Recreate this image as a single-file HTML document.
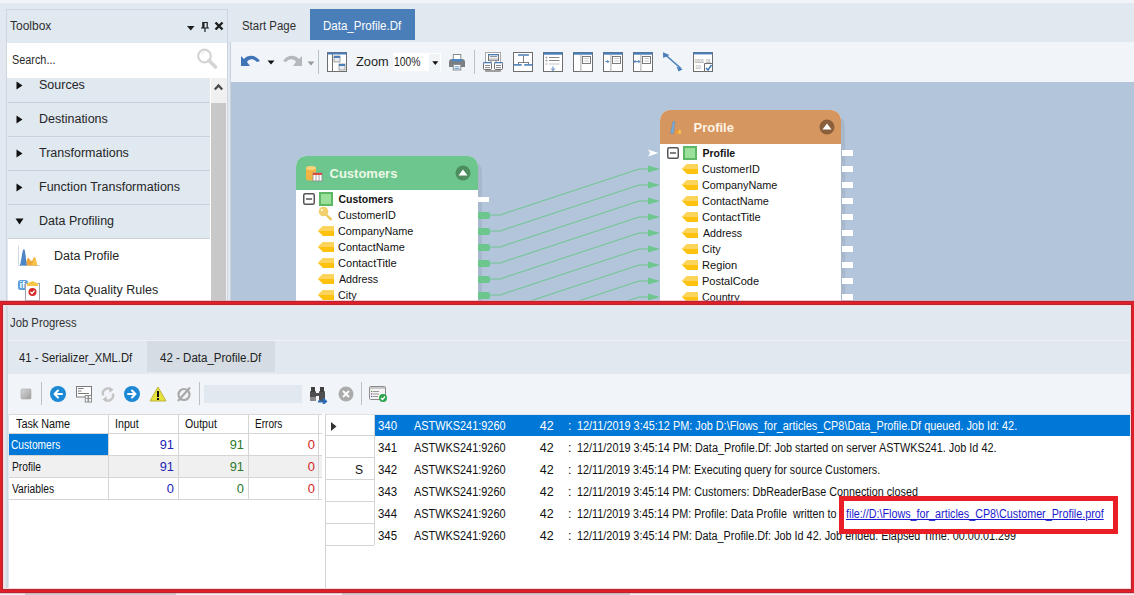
<!DOCTYPE html>
<html><head><meta charset="utf-8">
<style>
*{margin:0;padding:0;box-sizing:border-box}
html,body{width:1134px;height:595px;overflow:hidden;background:#E1E8EF;font-family:"Liberation Sans",sans-serif;color:#1E1E1E}
.a{position:absolute;display:block}
.t{position:absolute;white-space:pre;line-height:1}
</style></head><body>
<div class="a" style="left:0px;top:0px;width:1134px;height:3px;background:#F1F4F8"></div>
<div class="a" style="left:6px;top:9px;width:222px;height:292px;background:#E0E8F0;border:1px solid #CDD6E0;border-bottom:none"></div>
<div class="t" style="left:10.06px;top:19.72px;font-size:12.5px;color:#2E2E2E;font-weight:normal;transform:scaleX(0.9598);transform-origin:0 50%;">Toolbox</div>
<svg class="a" style="left:187px;top:26px" width="8" height="5" viewBox="0 0 8 5"><path d="M0 0H7.5L3.75 4.5Z" fill="#1E1E1E"/></svg>
<svg class="a" style="left:200px;top:21px" width="10" height="11" viewBox="0 0 10 11"><path d="M2.5 1.5H7.5M3 1V7M7.2 1V7M1 7H9M5 7V11" stroke="#1E1E1E" stroke-width="1.2" fill="none"/><rect x="2.5" y="1" width="2" height="6" fill="#1E1E1E"/></svg>
<svg class="a" style="left:214px;top:21px" width="10" height="10" viewBox="0 0 10 10"><path d="M1.5 1.5L8.5 8.5M8.5 1.5L1.5 8.5" stroke="#1E1E1E" stroke-width="2.4"/></svg>
<div class="a" style="left:7px;top:43px;width:220px;height:35px;background:#fff"></div>
<div class="t" style="left:11.51px;top:53.72px;font-size:12.5px;color:#2A2A2A;font-weight:normal;transform:scaleX(0.8688);transform-origin:0 50%;">Search...</div>
<svg class="a" style="left:196px;top:47px" width="24" height="24" viewBox="0 0 24 24"><circle cx="8.5" cy="9" r="6.3" stroke="#D4D4D4" stroke-width="2.2" fill="none"/><path d="M13 13.5L19.5 20" stroke="#D4D4D4" stroke-width="3.6" stroke-linecap="round"/><path d="M5.5 7.5A3.5 3.5 0 0 1 8.5 5" stroke="#E4E4E4" stroke-width="1" fill="none"/></svg>
<div class="a" style="left:8px;top:78px;width:202px;height:223px;overflow:hidden;background:#E0E8F0">
</div>
<div class="a" style="left:8px;top:102px;width:202px;height:1px;background:#C9D2DC"></div>
<div class="a" style="left:8px;top:136px;width:202px;height:1px;background:#C9D2DC"></div>
<div class="a" style="left:8px;top:170px;width:202px;height:1px;background:#C9D2DC"></div>
<div class="a" style="left:8px;top:204px;width:202px;height:1px;background:#C9D2DC"></div>
<div class="a" style="left:8px;top:238px;width:202px;height:1px;background:#C9D2DC"></div>
<div class="a" style="left:8px;top:239px;width:202px;height:62px;background:#FFFFFF"></div>
<div class="t" style="left:39px;top:78.92px;font-size:12.5px;color:#262626;font-weight:normal;">Sources</div>
<svg class="a" style="left:16px;top:81px" width="7" height="9" viewBox="0 0 7 9"><path d="M0.5 0.5L6.5 4.5L0.5 8.5Z" fill="#111"/></svg>
<div class="t" style="left:39px;top:112.92px;font-size:12.5px;color:#262626;font-weight:normal;">Destinations</div>
<svg class="a" style="left:16px;top:115px" width="7" height="9" viewBox="0 0 7 9"><path d="M0.5 0.5L6.5 4.5L0.5 8.5Z" fill="#111"/></svg>
<div class="t" style="left:39px;top:146.92px;font-size:12.5px;color:#262626;font-weight:normal;">Transformations</div>
<svg class="a" style="left:16px;top:149px" width="7" height="9" viewBox="0 0 7 9"><path d="M0.5 0.5L6.5 4.5L0.5 8.5Z" fill="#111"/></svg>
<div class="t" style="left:39px;top:180.92px;font-size:12.5px;color:#262626;font-weight:normal;">Function Transformations</div>
<svg class="a" style="left:16px;top:183px" width="7" height="9" viewBox="0 0 7 9"><path d="M0.5 0.5L6.5 4.5L0.5 8.5Z" fill="#111"/></svg>
<div class="t" style="left:39px;top:214.92px;font-size:12.5px;color:#262626;font-weight:normal;">Data Profiling</div>
<svg class="a" style="left:15px;top:218px" width="9" height="7" viewBox="0 0 9 7"><path d="M0.5 0.5H8.5L4.5 6.5Z" fill="#111"/></svg>
<div class="t" style="left:54px;top:250.42px;font-size:12.5px;color:#262626;font-weight:normal;">Data Profile</div>
<div class="t" style="left:54px;top:284.42px;font-size:12.5px;color:#262626;font-weight:normal;">Data Quality Rules</div>
<svg class="a" style="left:17px;top:245px" width="24" height="22" viewBox="0 0 24 22"><path d="M1.5 1V20.5H23" stroke="#D0D8E0" stroke-width="1" fill="none"/><path d="M9 20.5C9.5 14 10.5 13 11.5 13C12.5 13 13 16 14.5 16C16 16 16 12 17.5 12C19 12 19.5 20.5 21 20.5Z" fill="#F2A63A"/><path d="M15 20.5C16 16 16.5 12.5 17.5 12.5C19 12.5 19.5 20.5 21 20.5Z" fill="#F6C24A"/><path d="M2.5 20.5C4 20.5 5 4 7 4C8.5 4 9 17 10 20.5Z" fill="#4D86C6"/></svg>
<svg class="a" style="left:17px;top:279px" width="26" height="24" viewBox="0 0 26 24"><rect x="1" y="1" width="10" height="10" rx="2.5" fill="#5F9FDC"/><text x="2.6" y="9.3" font-size="9" fill="#fff" font-weight="bold" font-family="Liberation Sans">if</text><rect x="8.5" y="4.5" width="14" height="17" fill="#fff" stroke="#9AA4AE" stroke-width="1"/><path d="M10 7V4.5L15.5 2L21 4.5V7Z" fill="#F6C64A"/><circle cx="15.5" cy="13" r="4" fill="#D42B2B"/><path d="M13.5 13L15 14.5L17.6 11.6" stroke="#fff" stroke-width="1.3" fill="none"/></svg>
<div class="a" style="left:210px;top:78px;width:17px;height:223px;background:#F0F0F0"></div>
<div class="a" style="left:211px;top:103px;width:15px;height:198px;background:#C8C8C8"></div>
<div class="a" style="left:210px;top:78px;width:1px;height:223px;background:#FFFFFF"></div>
<svg class="a" style="left:213px;top:83px" width="11" height="8" viewBox="0 0 11 8"><path d="M1.8 6.5L5.5 2.5L9.2 6.5" stroke="#4A4A4A" stroke-width="2.3" fill="none"/></svg>
<div class="t" style="left:242.49px;top:19.72px;font-size:12.5px;color:#2E2E2E;font-weight:normal;transform:scaleX(0.9143);transform-origin:0 50%;">Start Page</div>
<div class="a" style="left:310px;top:9px;width:105px;height:31px;background:#4A7EB8"></div>
<div class="t" style="left:322.78px;top:19.72px;font-size:12.5px;color:#FFFFFF;font-weight:normal;transform:scaleX(0.9226);transform-origin:0 50%;">Data_Profile.Df</div>
<div class="a" style="left:230px;top:42px;width:904px;height:40px;background:#F1F5F9;border-left:1px solid #C9D2DC"></div>
<div class="a" style="left:230px;top:82px;width:904px;height:219px;background:#B3C5DA;border-left:1px solid #C9D2DC"></div>
<svg class="a" style="left:240px;top:53px" width="22" height="15" viewBox="0 0 22 15"><path d="M1 13V3L4 6C8 2 15 1 20 8L17 9C13 5 9 6 7 9L10 13Z" fill="#3F74B8"/></svg>
<svg class="a" style="left:267px;top:60px" width="8" height="5" viewBox="0 0 8 5"><path d="M0.5 0.5H7.5L4 4.5Z" fill="#111"/></svg>
<svg class="a" style="left:281px;top:53px" width="22" height="15" viewBox="0 0 22 15"><path d="M21 13V3L18 6C14 2 7 1 2 8L5 9C9 5 13 6 15 9L12 13Z" fill="#B5B8BC"/></svg>
<svg class="a" style="left:307px;top:61px" width="8" height="5" viewBox="0 0 8 5"><path d="M0.5 0.5H7.5L4 4.5Z" fill="#9A9A9A"/></svg>
<div class="a" style="left:318px;top:50px;width:1px;height:24px;background:#B9C1C9"></div>
<svg class="a" style="left:327px;top:52px" width="20" height="20" viewBox="0 0 20 20"><rect x="0.5" y="0.5" width="19" height="19" fill="#fff" stroke="#6E6E6E"/><rect x="5" y="1" width="1" height="18" fill="#6E6E6E"/><rect x="0.5" y="0.5" width="19" height="2" fill="#4A7EB8"/><rect x="7" y="4" width="6" height="6" fill="#E8ECF0" stroke="#8E8E8E" stroke-width="0.8"/><rect x="7" y="4" width="6" height="2" fill="#4A7EB8"/><rect x="12" y="12" width="6" height="6" fill="#E8ECF0" stroke="#8E8E8E" stroke-width="0.8"/><rect x="12" y="12" width="6" height="2" fill="#4A7EB8"/></svg>
<div class="t" style="left:355.62px;top:56.42px;font-size:12.5px;color:#1E1E1E;font-weight:normal;transform:scaleX(1.0211);transform-origin:0 50%;">Zoom</div>
<div class="a" style="left:393px;top:53px;width:48px;height:18px;background:#fff"></div>
<div class="t" style="left:393.72px;top:56.42px;font-size:12.5px;color:#1E1E1E;font-weight:normal;transform:scaleX(0.8302);transform-origin:0 50%;">100%</div>
<div class="a" style="left:429px;top:54px;width:11px;height:17px;background:#F1F4F7"></div>
<svg class="a" style="left:431.5px;top:60.5px" width="7" height="5" viewBox="0 0 7 5"><path d="M0.3 0.3H6.3L3.3 4Z" fill="#111"/></svg>
<svg class="a" style="left:447px;top:53px" width="20" height="18" viewBox="0 0 20 18"><rect x="6.3" y="1.5" width="7.5" height="6" fill="#fff" stroke="#8A8A8A" stroke-width="1"/><path d="M2 9C2 7 3 6 5 6H15C17 6 18 7 18 9V14H2Z" fill="#7B7F84"/><rect x="5" y="6" width="10" height="2.4" fill="#4F86C4"/><rect x="6.3" y="11.5" width="7.5" height="5.5" fill="#fff" stroke="#8A8A8A" stroke-width="1"/><path d="M7.5 13.8H12.5M7.5 15.6H12.5" stroke="#5A93CF" stroke-width="0.9"/></svg>
<div class="a" style="left:474px;top:50px;width:1px;height:24px;background:#B9C1C9"></div>
<svg class="a" style="left:483px;top:52px" width="20" height="20" viewBox="0 0 20 20"><rect x="2.5" y="0.5" width="15" height="18.5" fill="#fff" stroke="#A8A8A8"/><path d="M2.5 19H17.5" stroke="#6E6E6E"/><rect x="5.5" y="2.5" width="10" height="6" fill="#EAF0F6" stroke="#6E6E6E"/><rect x="5.5" y="2" width="10" height="1.3" fill="#4A7EB8"/><path d="M7 4.5H14" stroke="#7A7A7A" stroke-width="0.8"/><rect x="6" y="6.5" width="9" height="2" fill="#C8C8C8"/><path d="M8 8.5V10.5M13 8.5V10.5" stroke="#6E6E6E" stroke-width="0.8"/><rect x="0.5" y="10.5" width="8" height="7" rx="0.8" fill="#fff" stroke="#6E6E6E"/><rect x="0.5" y="10" width="8" height="1.3" fill="#4A7EB8"/><rect x="11.5" y="10.5" width="8" height="7" rx="0.8" fill="#fff" stroke="#6E6E6E"/><rect x="11.5" y="10" width="8" height="1.3" fill="#4A7EB8"/><path d="M2 13.5H7M2 15.6H7M13 13.5H18M13 15.6H18" stroke="#7A7A7A" stroke-width="0.9"/></svg>
<svg class="a" style="left:513px;top:52px" width="20" height="20" viewBox="0 0 20 20"><rect x="0.5" y="0.5" width="19" height="19" fill="#fff" stroke="#6E6E6E"/><rect x="5" y="2.2" width="11" height="1.6" rx="0.6" fill="#4A7EB8"/><path d="M10.5 3.8V10.2M5.5 10.5H15.5M5.5 10V12M15.5 10V12" stroke="#6E6E6E" stroke-width="0.9" fill="none"/><rect x="0.7" y="12.1" width="8" height="1.6" fill="#4A7EB8"/><rect x="11.2" y="12.1" width="8.4" height="1.6" fill="#4A7EB8"/></svg>
<svg class="a" style="left:543px;top:52px" width="20" height="20" viewBox="0 0 20 20"><rect x="0.5" y="0.5" width="19" height="19" fill="#fff" stroke="#6E6E6E"/><rect x="0.5" y="0.3" width="19" height="2.4" fill="#4A7EB8"/><path d="M6 5.5H16.5M6 8.5H16.5" stroke="#7A7A7A" stroke-width="0.9"/><path d="M6 12H16.5" stroke="#BDBDBD" stroke-width="0.9"/><path d="M2.5 5.5H4.5M3.5 4.5V6.5M2.5 8.5H4.5M3.5 7.5V9.5" stroke="#9A9A9A" stroke-width="0.8"/><circle cx="3.5" cy="12" r="0.9" fill="none" stroke="#C0C0C0" stroke-width="0.7"/><path d="M10 14.5V18.5M8 16.5L10 18.5L12 16.5" stroke="#4A7EB8" stroke-width="1" fill="none"/></svg>
<svg class="a" style="left:573px;top:52px" width="20" height="20" viewBox="0 0 20 20"><rect x="0.5" y="0.5" width="19" height="19" fill="#fff" stroke="#6E6E6E"/><rect x="0.5" y="0.3" width="19" height="2.4" fill="#4A7EB8"/><rect x="7.2" y="2.7" width="1.3" height="16.8" fill="#BDBDBD"/><rect x="9.5" y="4.5" width="8" height="7" fill="#fff" stroke="#6E6E6E" stroke-width="0.9"/><path d="M12 6.5H16M12 9H16" stroke="#C0C0C0" stroke-width="0.9"/><path d="M10.8 6.5H11.4M10.8 9H11.4" stroke="#B0B0B0" stroke-width="0.9"/></svg>
<svg class="a" style="left:603px;top:52px" width="20" height="20" viewBox="0 0 20 20"><rect x="0.5" y="0.5" width="19" height="19" fill="#fff" stroke="#6E6E6E"/><rect x="0.5" y="0.3" width="19" height="2.4" fill="#4A7EB8"/><rect x="7.2" y="2.7" width="1.3" height="16.8" fill="#BDBDBD"/><rect x="9.5" y="4.5" width="8" height="7" fill="#fff" stroke="#6E6E6E" stroke-width="0.9"/><path d="M12 6.5H16M12 9H16" stroke="#C0C0C0" stroke-width="0.9"/><path d="M10.8 6.5H11.4M10.8 9H11.4" stroke="#B0B0B0" stroke-width="0.9"/><path d="M2.4 9.6H5.8M4.3 8.1L5.8 9.6L4.3 11.1" stroke="#4A7EB8" stroke-width="1" fill="none"/></svg>
<svg class="a" style="left:633px;top:52px" width="20" height="20" viewBox="0 0 20 20"><rect x="0.5" y="0.5" width="19" height="19" fill="#fff" stroke="#6E6E6E"/><rect x="0.5" y="0.3" width="19" height="2.4" fill="#4A7EB8"/><rect x="7.2" y="2.7" width="1.3" height="16.8" fill="#BDBDBD"/><rect x="9.5" y="4.5" width="8" height="7" fill="#fff" stroke="#6E6E6E" stroke-width="0.9"/><path d="M12 6.5H16M12 9H16" stroke="#C0C0C0" stroke-width="0.9"/><path d="M10.8 6.5H11.4M10.8 9H11.4" stroke="#B0B0B0" stroke-width="0.9"/><path d="M1 9.6H6.8M2.5 8.1L1 9.6L2.5 11.1M5.3 8.1L6.8 9.6L5.3 11.1" stroke="#4A7EB8" stroke-width="1" fill="none"/></svg>
<svg class="a" style="left:663px;top:52px" width="20" height="20" viewBox="0 0 20 20"><path d="M2 2.5L18 16.5" stroke="#4A7EB8" stroke-width="1.6"/><path d="M0 0.2L6.5 3L0.2 6Z" fill="#4A7EB8"/><path d="M19.8 17.2L15.5 19.6L13.5 14.5Z" fill="#4A7EB8"/></svg>
<svg class="a" style="left:693px;top:52px" width="20" height="20" viewBox="0 0 20 20"><rect x="0.5" y="0.5" width="19" height="19" fill="#fff" stroke="#6E6E6E"/><rect x="0.5" y="0.3" width="19" height="2.1" fill="#4A7EB8"/><text x="1.6" y="10.6" font-size="5" fill="#999" font-family="Liberation Mono" letter-spacing="-0.75">0101 01</text><text x="2" y="16.6" font-size="5.6" fill="#AAA" font-family="Liberation Mono" letter-spacing="-0.5">10</text><path d="M11.5 11.5H19.5V19.5H11.5Z" fill="#fff" stroke="#6E6E6E"/><path d="M13 16L15 18L18.5 13" stroke="#4A7EB8" stroke-width="1.6" fill="none"/></svg>
<svg class="a" style="left:0;top:0" width="1134" height="301" viewBox="0 0 1134 301"><path d="M490 215H500L639 169H649" stroke="#6CC68E" stroke-width="1" fill="none"/><path d="M648 165.5L660 169L648 172.5Z" fill="#6CC68E"/><path d="M490 231H500L639 185H649" stroke="#6CC68E" stroke-width="1" fill="none"/><path d="M648 181.5L660 185L648 188.5Z" fill="#6CC68E"/><path d="M490 247H500L639 201H649" stroke="#6CC68E" stroke-width="1" fill="none"/><path d="M648 197.5L660 201L648 204.5Z" fill="#6CC68E"/><path d="M490 263H500L639 217H649" stroke="#6CC68E" stroke-width="1" fill="none"/><path d="M648 213.5L660 217L648 220.5Z" fill="#6CC68E"/><path d="M490 279H500L639 233H649" stroke="#6CC68E" stroke-width="1" fill="none"/><path d="M648 229.5L660 233L648 236.5Z" fill="#6CC68E"/><path d="M490 295H500L639 249H649" stroke="#6CC68E" stroke-width="1" fill="none"/><path d="M648 245.5L660 249L648 252.5Z" fill="#6CC68E"/><path d="M490 311H500L639 265H649" stroke="#6CC68E" stroke-width="1" fill="none"/><path d="M648 261.5L660 265L648 268.5Z" fill="#6CC68E"/><path d="M490 327H500L639 281H649" stroke="#6CC68E" stroke-width="1" fill="none"/><path d="M648 277.5L660 281L648 284.5Z" fill="#6CC68E"/><path d="M490 343H500L639 297H649" stroke="#6CC68E" stroke-width="1" fill="none"/><path d="M648 293.5L660 297L648 300.5Z" fill="#6CC68E"/></svg>
<div class="a" style="left:300px;top:161px;width:182px;height:140px;background:#A8B8CC;border-radius:10px 10px 0 0"></div>
<div class="a" style="left:296px;top:156px;width:182px;height:145px;background:#fff;border-radius:10px 10px 0 0;overflow:hidden"></div>
<div class="a" style="left:296px;top:156px;width:182px;height:34px;background:#6CC68E;border-radius:10px 10px 0 0"></div>
<div class="t" style="left:329.5px;top:167.00px;font-size:13px;color:#EEF8E6;font-weight:bold;">Customers</div>
<svg class="a" style="left:305px;top:165px" width="18" height="17" viewBox="0 0 18 17"><path d="M1 3C1 1 11 1 11 3V14C11 16 1 16 1 14Z" fill="#F2B544"/><ellipse cx="6" cy="3" rx="5" ry="2" fill="#F8D27A"/><rect x="8" y="8" width="9" height="8" fill="#fff" stroke="#8C8C8C" stroke-width="0.8"/><rect x="8" y="8" width="9" height="2" fill="#D94B3D"/><path d="M11 10V16M14 10V16" stroke="#8C8C8C" stroke-width="0.8"/></svg>
<svg class="a" style="left:455px;top:165px" width="16" height="16" viewBox="0 0 16 16"><circle cx="8" cy="8" r="7.5" fill="#4E8D5E"/><path d="M3.5 10.5H12.5L8 4.5Z" fill="#fff"/></svg>
<div class="a" style="left:478px;top:197px;width:11px;height:5px;background:#FFFFFF"></div>
<div class="a" style="left:478px;top:212px;width:12px;height:7px;background:#6CC68E;border-radius:0 2px 2px 0"></div>
<div class="a" style="left:478px;top:228px;width:12px;height:7px;background:#6CC68E;border-radius:0 2px 2px 0"></div>
<div class="a" style="left:478px;top:244px;width:12px;height:7px;background:#6CC68E;border-radius:0 2px 2px 0"></div>
<div class="a" style="left:478px;top:260px;width:12px;height:7px;background:#6CC68E;border-radius:0 2px 2px 0"></div>
<div class="a" style="left:478px;top:276px;width:12px;height:7px;background:#6CC68E;border-radius:0 2px 2px 0"></div>
<div class="a" style="left:478px;top:292px;width:12px;height:7px;background:#6CC68E;border-radius:0 2px 2px 0"></div>
<svg class="a" style="left:303px;top:193px" width="12" height="12" viewBox="0 0 12 12"><rect x="0.75" y="0.75" width="10.5" height="10.5" rx="1.5" fill="#fff" stroke="#555" stroke-width="1.5"/><path d="M3 6H9" stroke="#555" stroke-width="1.5"/></svg>
<svg class="a" style="left:319px;top:192px" width="14" height="14" viewBox="0 0 14 14"><rect x="0" y="0" width="14" height="14" fill="#5DB866"/><rect x="2" y="2" width="10" height="10" fill="#9BE09A"/></svg>
<div class="t" style="left:338.5px;top:194.11px;font-size:10.5px;color:#111;font-weight:bold;">Customers</div>
<svg class="a" style="left:318px;top:206px" width="16" height="16" viewBox="0 0 16 16"><path d="M7.5 8L13.5 14M11 12.5L12.5 11" stroke="#EFC85A" stroke-width="2.4"/><circle cx="5.5" cy="5.5" r="4.8" fill="#F2D06E"/><circle cx="4" cy="4" r="1.3" fill="#FFF4C8"/></svg>
<div class="t" style="left:337.96px;top:210.11px;font-size:10.5px;color:#111;font-weight:normal;transform:scaleX(1.0328);transform-origin:0 50%;">CustomerID</div>
<svg class="a" style="left:318px;top:226px" width="16" height="10" viewBox="0 0 16 10"><path d="M5 0H16V10H5L0 5Z" fill="#FFC20E"/><path d="M5 0H16V5H0Z" fill="#FCD45C"/></svg>
<div class="t" style="left:337.96px;top:226.11px;font-size:10.5px;color:#111;font-weight:normal;transform:scaleX(1.0337);transform-origin:0 50%;">CompanyName</div>
<svg class="a" style="left:318px;top:242px" width="16" height="10" viewBox="0 0 16 10"><path d="M5 0H16V10H5L0 5Z" fill="#FFC20E"/><path d="M5 0H16V5H0Z" fill="#FCD45C"/></svg>
<div class="t" style="left:337.95px;top:242.11px;font-size:10.5px;color:#111;font-weight:normal;transform:scaleX(1.0410);transform-origin:0 50%;">ContactName</div>
<svg class="a" style="left:318px;top:258px" width="16" height="10" viewBox="0 0 16 10"><path d="M5 0H16V10H5L0 5Z" fill="#FFC20E"/><path d="M5 0H16V5H0Z" fill="#FCD45C"/></svg>
<div class="t" style="left:337.95px;top:258.11px;font-size:10.5px;color:#111;font-weight:normal;transform:scaleX(1.0558);transform-origin:0 50%;">ContactTitle</div>
<svg class="a" style="left:318px;top:274px" width="16" height="10" viewBox="0 0 16 10"><path d="M5 0H16V10H5L0 5Z" fill="#FFC20E"/><path d="M5 0H16V5H0Z" fill="#FCD45C"/></svg>
<div class="t" style="left:338.50px;top:274.11px;font-size:10.5px;color:#111;font-weight:normal;transform:scaleX(1.0173);transform-origin:0 50%;">Address</div>
<svg class="a" style="left:318px;top:290px" width="16" height="10" viewBox="0 0 16 10"><path d="M5 0H16V10H5L0 5Z" fill="#FFC20E"/><path d="M5 0H16V5H0Z" fill="#FCD45C"/></svg>
<div class="t" style="left:337.96px;top:290.11px;font-size:10.5px;color:#111;font-weight:normal;transform:scaleX(1.0250);transform-origin:0 50%;">City</div>
<div class="a" style="left:664px;top:115px;width:181px;height:186px;background:#A8B8CC;border-radius:10px 10px 0 0"></div>
<div class="a" style="left:660px;top:110px;width:181px;height:191px;background:#fff;border-radius:10px 10px 0 0"></div>
<div class="a" style="left:660px;top:110px;width:181px;height:34px;background:#D6965F;border-radius:10px 10px 0 0"></div>
<div class="t" style="left:693.5px;top:121.00px;font-size:13px;color:#FFF3E4;font-weight:bold;">Profile</div>
<svg class="a" style="left:669px;top:120px" width="16" height="14" viewBox="0 0 16 14"><path d="M1.5 13.5L4 1.5L6 1.5L4.5 13.5Z" fill="#7EADD8" stroke="#6A8FB5" stroke-width="0.6"/><path d="M5.5 13.5L8.5 9.5L10 13.5Z" fill="#F29B2E"/><path d="M8.5 13.5L11 8.5L12.5 13.5Z" fill="#F6C24A"/></svg>
<svg class="a" style="left:819px;top:119px" width="16" height="16" viewBox="0 0 16 16"><circle cx="8" cy="8" r="7.5" fill="#8C5F3C"/><path d="M3.5 10.5H12.5L8 4.5Z" fill="#fff"/></svg>
<svg class="a" style="left:648px;top:149px" width="11" height="8" viewBox="0 0 11 8"><path d="M0 0.5L10.5 4L0 7.5L2 4Z" fill="#FFFFFF"/></svg>
<svg class="a" style="left:667px;top:147px" width="12" height="12" viewBox="0 0 12 12"><rect x="0.75" y="0.75" width="10.5" height="10.5" rx="1.5" fill="#fff" stroke="#555" stroke-width="1.5"/><path d="M3 6H9" stroke="#555" stroke-width="1.5"/></svg>
<svg class="a" style="left:683px;top:146px" width="14" height="14" viewBox="0 0 14 14"><rect x="0" y="0" width="14" height="14" fill="#5DB866"/><rect x="2" y="2" width="10" height="10" fill="#9BE09A"/></svg>
<div class="t" style="left:702.5px;top:148.11px;font-size:10.5px;color:#111;font-weight:bold;">Profile</div>
<svg class="a" style="left:682px;top:164px" width="16" height="10" viewBox="0 0 16 10"><path d="M5 0H16V10H5L0 5Z" fill="#FFC20E"/><path d="M5 0H16V5H0Z" fill="#FCD45C"/></svg>
<div class="t" style="left:701.96px;top:164.11px;font-size:10.5px;color:#111;font-weight:normal;transform:scaleX(1.0328);transform-origin:0 50%;">CustomerID</div>
<svg class="a" style="left:682px;top:180px" width="16" height="10" viewBox="0 0 16 10"><path d="M5 0H16V10H5L0 5Z" fill="#FFC20E"/><path d="M5 0H16V5H0Z" fill="#FCD45C"/></svg>
<div class="t" style="left:701.96px;top:180.11px;font-size:10.5px;color:#111;font-weight:normal;transform:scaleX(1.0337);transform-origin:0 50%;">CompanyName</div>
<svg class="a" style="left:682px;top:196px" width="16" height="10" viewBox="0 0 16 10"><path d="M5 0H16V10H5L0 5Z" fill="#FFC20E"/><path d="M5 0H16V5H0Z" fill="#FCD45C"/></svg>
<div class="t" style="left:701.95px;top:196.11px;font-size:10.5px;color:#111;font-weight:normal;transform:scaleX(1.0410);transform-origin:0 50%;">ContactName</div>
<svg class="a" style="left:682px;top:212px" width="16" height="10" viewBox="0 0 16 10"><path d="M5 0H16V10H5L0 5Z" fill="#FFC20E"/><path d="M5 0H16V5H0Z" fill="#FCD45C"/></svg>
<div class="t" style="left:701.95px;top:212.11px;font-size:10.5px;color:#111;font-weight:normal;transform:scaleX(1.0558);transform-origin:0 50%;">ContactTitle</div>
<svg class="a" style="left:682px;top:228px" width="16" height="10" viewBox="0 0 16 10"><path d="M5 0H16V10H5L0 5Z" fill="#FFC20E"/><path d="M5 0H16V5H0Z" fill="#FCD45C"/></svg>
<div class="t" style="left:702.50px;top:228.11px;font-size:10.5px;color:#111;font-weight:normal;transform:scaleX(1.0173);transform-origin:0 50%;">Address</div>
<svg class="a" style="left:682px;top:244px" width="16" height="10" viewBox="0 0 16 10"><path d="M5 0H16V10H5L0 5Z" fill="#FFC20E"/><path d="M5 0H16V5H0Z" fill="#FCD45C"/></svg>
<div class="t" style="left:701.96px;top:244.11px;font-size:10.5px;color:#111;font-weight:normal;transform:scaleX(1.0250);transform-origin:0 50%;">City</div>
<svg class="a" style="left:682px;top:260px" width="16" height="10" viewBox="0 0 16 10"><path d="M5 0H16V10H5L0 5Z" fill="#FFC20E"/><path d="M5 0H16V5H0Z" fill="#FCD45C"/></svg>
<div class="t" style="left:701.61px;top:260.11px;font-size:10.5px;color:#111;font-weight:normal;transform:scaleX(1.0579);transform-origin:0 50%;">Region</div>
<svg class="a" style="left:682px;top:276px" width="16" height="10" viewBox="0 0 16 10"><path d="M5 0H16V10H5L0 5Z" fill="#FFC20E"/><path d="M5 0H16V5H0Z" fill="#FCD45C"/></svg>
<div class="t" style="left:701.62px;top:276.11px;font-size:10.5px;color:#111;font-weight:normal;transform:scaleX(1.0529);transform-origin:0 50%;">PostalCode</div>
<svg class="a" style="left:682px;top:292px" width="16" height="10" viewBox="0 0 16 10"><path d="M5 0H16V10H5L0 5Z" fill="#FFC20E"/><path d="M5 0H16V5H0Z" fill="#FCD45C"/></svg>
<div class="t" style="left:701.96px;top:292.11px;font-size:10.5px;color:#111;font-weight:normal;transform:scaleX(1.0207);transform-origin:0 50%;">Country</div>
<div class="a" style="left:842px;top:150px;width:11px;height:6px;background:#FFFFFF"></div>
<div class="a" style="left:842px;top:166px;width:11px;height:6px;background:#FFFFFF"></div>
<div class="a" style="left:842px;top:182px;width:11px;height:6px;background:#FFFFFF"></div>
<div class="a" style="left:842px;top:198px;width:11px;height:6px;background:#FFFFFF"></div>
<div class="a" style="left:842px;top:214px;width:11px;height:6px;background:#FFFFFF"></div>
<div class="a" style="left:842px;top:230px;width:11px;height:6px;background:#FFFFFF"></div>
<div class="a" style="left:842px;top:246px;width:11px;height:6px;background:#FFFFFF"></div>
<div class="a" style="left:842px;top:262px;width:11px;height:6px;background:#FFFFFF"></div>
<div class="a" style="left:842px;top:278px;width:11px;height:6px;background:#FFFFFF"></div>
<div class="a" style="left:842px;top:294px;width:11px;height:6px;background:#FFFFFF"></div>
<div class="a" style="left:0px;top:301px;width:1134px;height:292px;background:#E1E8EF"></div>
<div class="t" style="left:9.83px;top:316.84px;font-size:12px;color:#333;font-weight:normal;transform:scaleX(0.9414);transform-origin:0 50%;">Job Progress</div>
<div class="a" style="left:5px;top:340px;width:1126px;height:1px;background:#EEF2F6"></div>
<div class="a" style="left:147px;top:341px;width:128px;height:31px;background:#D5DCE3"></div>
<div class="t" style="left:19.45px;top:351.84px;font-size:12px;color:#222;font-weight:normal;transform:scaleX(0.9379);transform-origin:0 50%;">41 - Serializer_XML.Df</div>
<div class="t" style="left:159.74px;top:351.84px;font-size:12px;color:#222;font-weight:normal;transform:scaleX(0.9605);transform-origin:0 50%;">42 - Data_Profile.Df</div>
<div class="a" style="left:8px;top:374px;width:1123px;height:40px;background:#F1F5F9"></div>
<div class="a" style="left:4px;top:306px;width:2px;height:283px;background:#E4E8EE"></div>
<div class="a" style="left:6px;top:306px;width:2px;height:283px;background:#D2DAE2"></div>
<div class="a" style="left:9px;top:414px;width:1122px;height:175px;background:#fff"></div>
<div class="a" style="left:0px;top:593px;width:1134px;height:2px;background:#F2F2F2"></div>
<div class="a" style="left:25px;top:593px;width:151px;height:2px;background:#CDCDCD"></div>
<div class="a" style="left:342px;top:593px;width:288px;height:2px;background:#CDCDCD"></div>
<svg class="a" style="left:20px;top:388px" width="12" height="12" viewBox="0 0 12 12"><defs><linearGradient id="gs" x1="0" y1="0" x2="1" y2="1"><stop offset="0" stop-color="#D8D8D8"/><stop offset="1" stop-color="#9E9E9E"/></linearGradient></defs><rect x="1" y="1" width="10" height="10" rx="1" fill="url(#gs)" stroke="#A8A8A8" stroke-width="0.6"/></svg>
<div class="a" style="left:41px;top:382px;width:1px;height:23px;background:#B9C1C9"></div>
<svg class="a" style="left:50px;top:386px" width="16" height="16" viewBox="0 0 16 16"><circle cx="8" cy="8" r="8" fill="#1C88D6"/><path d="M12 8H4.5M8 4.5L4.5 8L8 11.5" stroke="#fff" stroke-width="2" fill="none" stroke-linecap="round" stroke-linejoin="round"/></svg>
<svg class="a" style="left:76px;top:386px" width="17" height="17" viewBox="0 0 17 17"><rect x="0.5" y="0.5" width="15" height="10.5" fill="#fff" stroke="#7A7A7A"/><path d="M2 2.5H7.5M2 5H5.5M2 7.5H13" stroke="#7A7A7A" stroke-width="1"/><rect x="9.3" y="9.5" width="2.7" height="6.5" fill="#fff" stroke="#8A8A8A" stroke-width="1"/><rect x="12.7" y="9.5" width="2.8" height="6.5" fill="#fff" stroke="#8A8A8A" stroke-width="1"/><path d="M10 12.5H15" stroke="#8A8A8A" stroke-width="0.8"/></svg>
<svg class="a" style="left:101px;top:386px" width="14" height="17" viewBox="0 0 14 17"><path d="M2.3 9.5A5 5 0 0 1 10 3.6" stroke="#C4C4C4" stroke-width="2.4" fill="none"/><path d="M8 0.5L12.5 3.5L8.5 7Z" fill="#C4C4C4"/><path d="M11.7 7.5A5 5 0 0 1 4 13.4" stroke="#C4C4C4" stroke-width="2.4" fill="none"/><path d="M6 16.5L1.5 13.5L5.5 10Z" fill="#C4C4C4"/></svg>
<svg class="a" style="left:124px;top:386px" width="16" height="16" viewBox="0 0 16 16"><circle cx="8" cy="8" r="8" fill="#1C88D6"/><path d="M4 8H11.5M8 4.5L11.5 8L8 11.5" stroke="#fff" stroke-width="2" fill="none" stroke-linecap="round" stroke-linejoin="round"/></svg>
<svg class="a" style="left:149px;top:386px" width="18" height="16" viewBox="0 0 18 16"><path d="M9 1L17 15H1Z" fill="#E6E23C" stroke="#BDB43A" stroke-width="1" stroke-linejoin="round"/><rect x="8" y="5" width="2" height="6" fill="#111"/><rect x="8" y="12" width="2" height="2" fill="#111"/></svg>
<svg class="a" style="left:176px;top:386px" width="16" height="16" viewBox="0 0 16 16"><circle cx="8" cy="8.5" r="5.5" stroke="#A9A9A9" stroke-width="2.2" fill="none"/><path d="M2 15L14 1.5" stroke="#A9A9A9" stroke-width="2.2"/></svg>
<div class="a" style="left:199px;top:382px;width:1px;height:23px;background:#B9C1C9"></div>
<div class="a" style="left:204px;top:385px;width:98px;height:18px;background:#E1E8EF"></div>
<svg class="a" style="left:309px;top:386px" width="20" height="18" viewBox="0 0 20 18"><rect x="1" y="5" width="6" height="10" rx="1" fill="#4F4F4F"/><rect x="10" y="5" width="6" height="10" rx="1" fill="#4F4F4F"/><rect x="2" y="1" width="4" height="5" fill="#3F3F3F"/><rect x="11" y="1" width="4" height="5" fill="#3F3F3F"/><rect x="6" y="7" width="5" height="3" fill="#4F4F4F"/><rect x="1" y="11" width="6" height="4" fill="#8A8A8A"/><path d="M9 15.5H17M14 12.5L17 15.5L14 18" stroke="#2E6BB5" stroke-width="2" fill="none"/></svg>
<svg class="a" style="left:338px;top:386px" width="16" height="16" viewBox="0 0 16 16"><circle cx="8" cy="8" r="7.5" fill="#ABABAB"/><path d="M5 5L11 11M11 5L5 11" stroke="#fff" stroke-width="1.8"/></svg>
<div class="a" style="left:361px;top:382px;width:1px;height:23px;background:#B9C1C9"></div>
<svg class="a" style="left:369px;top:386px" width="19" height="16" viewBox="0 0 19 16"><rect x="0.5" y="0.5" width="16" height="13" rx="1" fill="#F4F4F4" stroke="#8A8A8A"/><rect x="1" y="1" width="15" height="2" fill="#C8C8C8"/><path d="M4 5.5H10M4 8H10M4 10.5H9" stroke="#9A9A9A"/><circle cx="2.7" cy="5.5" r="0.7" fill="#3A8A3A"/><circle cx="2.7" cy="8" r="0.7" fill="#8A3A8A"/><circle cx="2.7" cy="10.5" r="0.7" fill="#3A5A9A"/><circle cx="14" cy="12" r="4" fill="#2EA44F"/><path d="M12 12L13.5 13.5L16 10.5" stroke="#fff" stroke-width="1.3" fill="none"/></svg>
<div class="a" style="left:9px;top:414px;width:313px;height:1px;background:#DADADA"></div>
<div class="t" style="left:16.28px;top:418.42px;font-size:12.5px;color:#111;font-weight:normal;transform:scaleX(0.8652);transform-origin:0 50%;">Task Name</div>
<div class="t" style="left:114.84px;top:418.42px;font-size:12.5px;color:#111;font-weight:normal;transform:scaleX(0.8526);transform-origin:0 50%;">Input</div>
<div class="t" style="left:185.02px;top:418.42px;font-size:12.5px;color:#111;font-weight:normal;transform:scaleX(0.8481);transform-origin:0 50%;">Output</div>
<div class="t" style="left:255.20px;top:418.42px;font-size:12.5px;color:#111;font-weight:normal;transform:scaleX(0.8038);transform-origin:0 50%;">Errors</div>
<div class="a" style="left:9px;top:434px;width:99px;height:21px;background:#0078D7"></div>
<div class="a" style="left:9px;top:456px;width:313px;height:21px;background:#F0F0F0"></div>
<div class="a" style="left:9px;top:433px;width:313px;height:1px;background:#D5D5D5"></div>
<div class="a" style="left:9px;top:455px;width:313px;height:1px;background:#D5D5D5"></div>
<div class="a" style="left:9px;top:477px;width:313px;height:1px;background:#D5D5D5"></div>
<div class="a" style="left:9px;top:499px;width:313px;height:1px;background:#D5D5D5"></div>
<div class="a" style="left:108px;top:415px;width:1px;height:84px;background:#D5D5D5"></div>
<div class="a" style="left:178px;top:415px;width:1px;height:84px;background:#D5D5D5"></div>
<div class="a" style="left:248px;top:415px;width:1px;height:84px;background:#D5D5D5"></div>
<div class="a" style="left:318px;top:415px;width:1px;height:84px;background:#D5D5D5"></div>
<div class="a" style="left:108px;top:433px;width:1px;height:22px;background:#D5D5D5"></div>
<div class="t" style="left:11.29px;top:439.42px;font-size:12.5px;color:#FFFFFF;font-weight:normal;transform:scaleX(0.8152);transform-origin:0 50%;">Customers</div>
<div class="t" style="left:11.68px;top:461.42px;font-size:12.5px;color:#111;font-weight:normal;transform:scaleX(0.8177);transform-origin:0 50%;">Profile</div>
<div class="t" style="left:12.47px;top:483.42px;font-size:12.5px;color:#111;font-weight:normal;transform:scaleX(0.8222);transform-origin:0 50%;">Variables</div>
<div class="t" style="right:959.86px;top:439.42px;font-size:12.5px;color:#2424B4;font-weight:normal;transform:scaleX(1.0221);transform-origin:100% 50%;">91</div>
<div class="t" style="right:889.86px;top:439.42px;font-size:12.5px;color:#2A7A2A;font-weight:normal;transform:scaleX(1.0221);transform-origin:100% 50%;">91</div>
<div class="t" style="right:819.50px;top:439.42px;font-size:12.5px;color:#D42424;font-weight:normal;transform:scaleX(1.0333);transform-origin:100% 50%;">0</div>
<div class="t" style="right:959.86px;top:461.42px;font-size:12.5px;color:#2424B4;font-weight:normal;transform:scaleX(1.0221);transform-origin:100% 50%;">91</div>
<div class="t" style="right:889.86px;top:461.42px;font-size:12.5px;color:#2A7A2A;font-weight:normal;transform:scaleX(1.0221);transform-origin:100% 50%;">91</div>
<div class="t" style="right:819.50px;top:461.42px;font-size:12.5px;color:#D42424;font-weight:normal;transform:scaleX(1.0333);transform-origin:100% 50%;">0</div>
<div class="t" style="right:960.00px;top:483.42px;font-size:12.5px;color:#2424B4;font-weight:normal;transform:scaleX(1.0333);transform-origin:100% 50%;">0</div>
<div class="t" style="right:890.00px;top:483.42px;font-size:12.5px;color:#2A7A2A;font-weight:normal;transform:scaleX(1.0333);transform-origin:100% 50%;">0</div>
<div class="t" style="right:819.50px;top:483.42px;font-size:12.5px;color:#D42424;font-weight:normal;transform:scaleX(1.0333);transform-origin:100% 50%;">0</div>
<div class="a" style="left:325px;top:414px;width:1px;height:175px;background:#D5D5D5"></div>
<div class="a" style="left:326px;top:414px;width:805px;height:1px;background:#E2E2E2"></div>
<div class="a" style="left:374px;top:415px;width:1px;height:130px;background:#D5D5D5"></div>
<div class="a" style="left:326px;top:435px;width:48px;height:1px;background:#D5D5D5"></div>
<div class="a" style="left:326px;top:457px;width:48px;height:1px;background:#D5D5D5"></div>
<div class="a" style="left:326px;top:479px;width:48px;height:1px;background:#D5D5D5"></div>
<div class="a" style="left:326px;top:501px;width:48px;height:1px;background:#D5D5D5"></div>
<div class="a" style="left:326px;top:523px;width:48px;height:1px;background:#D5D5D5"></div>
<div class="a" style="left:326px;top:545px;width:48px;height:1px;background:#D5D5D5"></div>
<div class="a" style="left:375px;top:415px;width:756px;height:21px;background:#0078D7"></div>
<svg class="a" style="left:330px;top:421px" width="8" height="11" viewBox="0 0 8 11"><path d="M1 1L6.5 5.5L1 10Z" fill="#333"/></svg>
<div class="t" style="left:354.75px;top:464.42px;font-size:12.5px;color:#111;font-weight:normal;transform:scaleX(0.9697);transform-origin:0 50%;">S</div>
<div class="t" style="left:377.57px;top:420.42px;font-size:12.5px;color:#FFFFFF;font-weight:normal;transform:scaleX(0.9143);transform-origin:0 50%;">340</div>
<div class="t" style="left:414.00px;top:420.42px;font-size:12.5px;color:#FFFFFF;font-weight:normal;transform:scaleX(0.8723);transform-origin:0 50%;">ASTWKS241:9260</div>
<div class="t" style="left:539.72px;top:420.42px;font-size:12.5px;color:#FFFFFF;font-weight:normal;transform:scaleX(1.0000);transform-origin:0 50%;">42</div>
<div class="t" style="left:568px;top:420.42px;font-size:12.5px;color:#FFFFFF;font-weight:normal;">:</div>
<div class="t" style="left:576.68px;top:420.42px;font-size:12.5px;color:#FFFFFF;font-weight:normal;transform:scaleX(0.8694);transform-origin:0 50%;">12/11/2019 3:45:12 PM: Job D:\Flows_for_articles_CP8\Data_Profile.Df queued. Job Id: 42.</div>
<div class="t" style="left:377.57px;top:442.42px;font-size:12.5px;color:#111;font-weight:normal;transform:scaleX(0.9201);transform-origin:0 50%;">341</div>
<div class="t" style="left:414.00px;top:442.42px;font-size:12.5px;color:#111;font-weight:normal;transform:scaleX(0.8723);transform-origin:0 50%;">ASTWKS241:9260</div>
<div class="t" style="left:539.72px;top:442.42px;font-size:12.5px;color:#111;font-weight:normal;transform:scaleX(1.0000);transform-origin:0 50%;">42</div>
<div class="t" style="left:568px;top:442.42px;font-size:12.5px;color:#111;font-weight:normal;">:</div>
<div class="t" style="left:576.69px;top:442.42px;font-size:12.5px;color:#111;font-weight:normal;transform:scaleX(0.8678);transform-origin:0 50%;">12/11/2019 3:45:14 PM: Data_Profile.Df: Job started on server ASTWKS241. Job Id 42.</div>
<div class="t" style="left:377.57px;top:464.42px;font-size:12.5px;color:#111;font-weight:normal;transform:scaleX(0.9201);transform-origin:0 50%;">342</div>
<div class="t" style="left:414.00px;top:464.42px;font-size:12.5px;color:#111;font-weight:normal;transform:scaleX(0.8723);transform-origin:0 50%;">ASTWKS241:9260</div>
<div class="t" style="left:539.72px;top:464.42px;font-size:12.5px;color:#111;font-weight:normal;transform:scaleX(1.0000);transform-origin:0 50%;">42</div>
<div class="t" style="left:568px;top:464.42px;font-size:12.5px;color:#111;font-weight:normal;">:</div>
<div class="t" style="left:576.69px;top:464.42px;font-size:12.5px;color:#111;font-weight:normal;transform:scaleX(0.8611);transform-origin:0 50%;">12/11/2019 3:45:14 PM: Executing query for source Customers.</div>
<div class="t" style="left:377.57px;top:486.42px;font-size:12.5px;color:#111;font-weight:normal;transform:scaleX(0.9172);transform-origin:0 50%;">343</div>
<div class="t" style="left:414.00px;top:486.42px;font-size:12.5px;color:#111;font-weight:normal;transform:scaleX(0.8723);transform-origin:0 50%;">ASTWKS241:9260</div>
<div class="t" style="left:539.72px;top:486.42px;font-size:12.5px;color:#111;font-weight:normal;transform:scaleX(1.0000);transform-origin:0 50%;">42</div>
<div class="t" style="left:568px;top:486.42px;font-size:12.5px;color:#111;font-weight:normal;">:</div>
<div class="t" style="left:576.69px;top:486.42px;font-size:12.5px;color:#111;font-weight:normal;transform:scaleX(0.8627);transform-origin:0 50%;">12/11/2019 3:45:14 PM: Customers: DbReaderBase Connection closed</div>
<div class="t" style="left:377.57px;top:508.42px;font-size:12.5px;color:#111;font-weight:normal;transform:scaleX(0.9086);transform-origin:0 50%;">344</div>
<div class="t" style="left:414.00px;top:508.42px;font-size:12.5px;color:#111;font-weight:normal;transform:scaleX(0.8723);transform-origin:0 50%;">ASTWKS241:9260</div>
<div class="t" style="left:539.72px;top:508.42px;font-size:12.5px;color:#111;font-weight:normal;transform:scaleX(1.0000);transform-origin:0 50%;">42</div>
<div class="t" style="left:568px;top:508.42px;font-size:12.5px;color:#111;font-weight:normal;">:</div>
<div class="t" style="left:576.69px;top:508.42px;font-size:12.5px;color:#111;font-weight:normal;transform:scaleX(0.8614);transform-origin:0 50%;">12/11/2019 3:45:14 PM: Profile: Data Profile  written to</div>
<div class="t" style="left:377.57px;top:530.42px;font-size:12.5px;color:#111;font-weight:normal;transform:scaleX(0.9157);transform-origin:0 50%;">345</div>
<div class="t" style="left:414.00px;top:530.42px;font-size:12.5px;color:#111;font-weight:normal;transform:scaleX(0.8723);transform-origin:0 50%;">ASTWKS241:9260</div>
<div class="t" style="left:539.72px;top:530.42px;font-size:12.5px;color:#111;font-weight:normal;transform:scaleX(1.0000);transform-origin:0 50%;">42</div>
<div class="t" style="left:568px;top:530.42px;font-size:12.5px;color:#111;font-weight:normal;">:</div>
<div class="t" style="left:576.69px;top:530.42px;font-size:12.5px;color:#111;font-weight:normal;transform:scaleX(0.8658);transform-origin:0 50%;">12/11/2019 3:45:14 PM: Data_Profile.Df: Job Id 42. Job ended. Elapsed Time: 00:00:01.299</div>
<div class="t" style="left:846.37px;top:508.42px;font-size:12.5px;color:#1A1AD0;font-weight:normal;transform:scaleX(0.8607);transform-origin:0 50%;text-decoration:underline">file://D:\Flows_for_articles_CP8\Customer_Profile.prof</div>
<div class="a" style="left:839px;top:496px;width:279px;height:38px;border:5px solid #EA1E26"></div>
<div class="a" style="left:-1px;top:300px;width:1136px;height:294px;border:1px solid rgba(240,150,170,0.55)"></div>
<div class="a" style="left:-1px;top:301px;width:1136px;height:292px;border:1px solid #B3262F"></div>
<div class="a" style="left:0px;top:302px;width:1134px;height:290px;border:2px solid #E01F28"></div>
<div class="a" style="left:2px;top:304px;width:1130px;height:286px;border:1px solid #B3262F"></div>
<div class="a" style="left:3px;top:305px;width:1128px;height:284px;border:1px solid #FBD9DF"></div>
</body></html>
